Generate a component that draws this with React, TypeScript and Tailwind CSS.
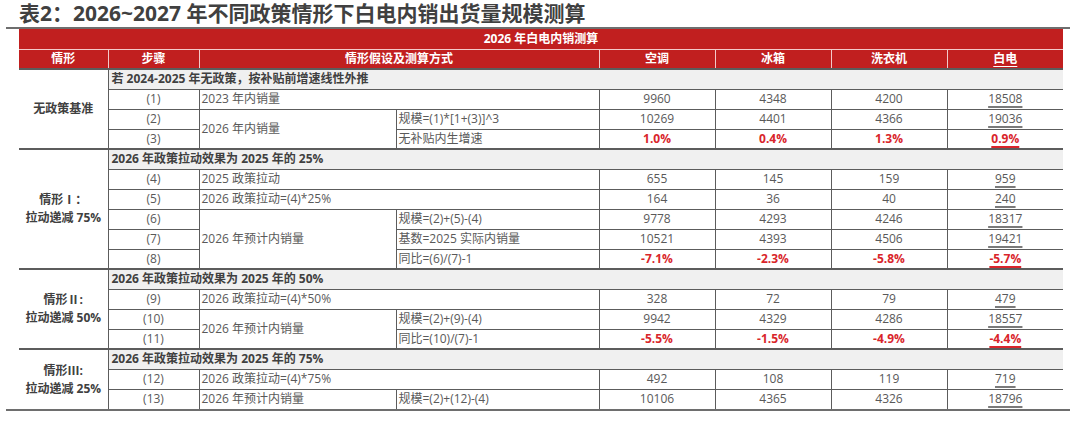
import React from "react";

const FONT = { fontFamily: '"Open Sans", "Noto Sans CJK SC", sans-serif' };

type Val = string;

const B = "border-[#5c5c5c]";

function ValCells({ vals, red, last }: { vals: Val[]; red?: boolean; last?: boolean }) {
  const base = `border-l ${B} ${last ? "" : "border-b"} text-center`;
  const tc = red ? "text-[#d9252b] font-bold" : "text-[#595959]";
  return (
    <>
      {vals.slice(0, 3).map((v, i) => (
        <td key={i} className={`${base} ${tc}`}>{v}</td>
      ))}
      <td className={`${base} ${tc}`}>
        <span
          className={`underline decoration-2 underline-offset-[3px] ${red ? "decoration-[#d9252b]" : "decoration-[#7a7a7a]"}`}
        >
          {vals[3]}
        </span>
      </td>
    </>
  );
}

function StepCell({ s, last }: { s: string; last?: boolean }) {
  return <td className={`${last ? "" : "border-b"} ${B} text-center text-[#595959]`}>{s}</td>;
}

function TextCell({
  t,
  colSpan,
  rowSpan,
  last,
}: {
  t: string;
  colSpan?: number;
  rowSpan?: number;
  last?: boolean;
}) {
  return (
    <td
      colSpan={colSpan}
      rowSpan={rowSpan}
      className={`border-l ${last ? "" : "border-b"} ${B} pl-[2px] text-left text-[#595959]`}
    >
      {t}
    </td>
  );
}

function SectionHead({ label, text, rowSpan }: { label: React.ReactNode; text: string; rowSpan: number }) {
  return (
    <tr className="h-[20px]">
      <td
        rowSpan={rowSpan}
        className={`border-t-2 border-r ${B} text-center font-bold text-[#404040] leading-[18px]`}
      >
        {label}
      </td>
      <td colSpan={7} className={`border-t-2 border-b ${B} bg-[#f0f0f0] pl-[3px] font-bold text-[#404040]`}>
        {text}
      </td>
    </tr>
  );
}

export default function App() {
  return (
    <div className="w-[1080px] h-[423px] bg-white overflow-hidden" style={FONT}>
      <div className="h-[27px] pl-[19px] text-[21px] leading-[27px] font-bold text-[#404040] whitespace-nowrap">
        表2：2026~2027 年不同政策情形下白电内销出货量规模测算
      </div>
      <div className="ml-[6px] w-[1064px] border-t-2 border-b-2 border-[#6e6e6e]">
        <table className="ml-[13px] w-[1044px] table-fixed text-[12px]">
          <colgroup>
            <col className="w-[89px]" />
            <col className="w-[91px]" />
            <col className="w-[197px]" />
            <col className="w-[203px]" />
            <col className="w-[116px]" />
            <col className="w-[116px]" />
            <col className="w-[116px]" />
            <col className="w-[116px]" />
          </colgroup>
          <thead>
            <tr className="h-[20px] bg-[#c11f1f] text-white font-bold">
              <td colSpan={8} className="text-center border-b border-[#f3c9c9]">
                2026 年白电内销测算
              </td>
            </tr>
            <tr className="h-[20px] bg-[#c11f1f] text-white font-bold">
              <td className="text-center border-b-2 border-b-[#5c5c5c]">情形</td>
              <td className="text-center border-l border-l-[#f3c9c9] border-b-2 border-b-[#5c5c5c]">步骤</td>
              <td colSpan={2} className="text-center border-l border-l-[#f3c9c9] border-b-2 border-b-[#5c5c5c]">
                情形假设及测算方式
              </td>
              <td className="text-center border-l border-l-[#f3c9c9] border-b-2 border-b-[#5c5c5c]">空调</td>
              <td className="text-center border-l border-l-[#f3c9c9] border-b-2 border-b-[#5c5c5c]">冰箱</td>
              <td className="text-center border-l border-l-[#f3c9c9] border-b-2 border-b-[#5c5c5c]">洗衣机</td>
              <td className="text-center border-l border-l-[#f3c9c9] border-b-2 border-b-[#5c5c5c]">
                <span className="underline decoration-1 underline-offset-[3px]">白电</span>
              </td>
            </tr>
          </thead>
          <tbody>
            <SectionHead rowSpan={4} label="无政策基准" text="若 2024-2025 年无政策，按补贴前增速线性外推" />
            <tr className="h-[20px]">
              <StepCell s="(1)" />
              <TextCell t="2023 年内销量" colSpan={2} />
              <ValCells vals={["9960", "4348", "4200", "18508"]} />
            </tr>
            <tr className="h-[20px]">
              <StepCell s="(2)" />
              <TextCell t="2026 年内销量" rowSpan={2} />
              <TextCell t="规模=(1)*[1+(3)]^3" />
              <ValCells vals={["10269", "4401", "4366", "19036"]} />
            </tr>
            <tr className="h-[20px]">
              <StepCell s="(3)" />
              <TextCell t="无补贴内生增速" />
              <ValCells red vals={["1.0%", "0.4%", "1.3%", "0.9%"]} />
            </tr>

            <SectionHead
              rowSpan={6}
              label={
                <>
                  情形Ⅰ：
                  <br />
                  拉动递减 75%
                </>
              }
              text="2026 年政策拉动效果为 2025 年的 25%"
            />
            <tr className="h-[20px]">
              <StepCell s="(4)" />
              <TextCell t="2025 政策拉动" colSpan={2} />
              <ValCells vals={["655", "145", "159", "959"]} />
            </tr>
            <tr className="h-[20px]">
              <StepCell s="(5)" />
              <TextCell t="2026 政策拉动=(4)*25%" colSpan={2} />
              <ValCells vals={["164", "36", "40", "240"]} />
            </tr>
            <tr className="h-[20px]">
              <StepCell s="(6)" />
              <TextCell t="2026 年预计内销量" rowSpan={3} />
              <TextCell t="规模=(2)+(5)-(4)" />
              <ValCells vals={["9778", "4293", "4246", "18317"]} />
            </tr>
            <tr className="h-[20px]">
              <StepCell s="(7)" />
              <TextCell t="基数=2025 实际内销量" />
              <ValCells vals={["10521", "4393", "4506", "19421"]} />
            </tr>
            <tr className="h-[20px]">
              <StepCell s="(8)" />
              <TextCell t="同比=(6)/(7)-1" />
              <ValCells red vals={["-7.1%", "-2.3%", "-5.8%", "-5.7%"]} />
            </tr>

            <SectionHead
              rowSpan={4}
              label={
                <>
                  情形Ⅱ:
                  <br />
                  拉动递减 50%
                </>
              }
              text="2026 年政策拉动效果为 2025 年的 50%"
            />
            <tr className="h-[20px]">
              <StepCell s="(9)" />
              <TextCell t="2026 政策拉动=(4)*50%" colSpan={2} />
              <ValCells vals={["328", "72", "79", "479"]} />
            </tr>
            <tr className="h-[20px]">
              <StepCell s="(10)" />
              <TextCell t="2026 年预计内销量" rowSpan={2} />
              <TextCell t="规模=(2)+(9)-(4)" />
              <ValCells vals={["9942", "4329", "4286", "18557"]} />
            </tr>
            <tr className="h-[20px]">
              <StepCell s="(11)" />
              <TextCell t="同比=(10)/(7)-1" />
              <ValCells red vals={["-5.5%", "-1.5%", "-4.9%", "-4.4%"]} />
            </tr>

            <SectionHead
              rowSpan={3}
              label={
                <>
                  情形Ⅲ:
                  <br />
                  拉动递减 25%
                </>
              }
              text="2026 年政策拉动效果为 2025 年的 75%"
            />
            <tr className="h-[20px]">
              <StepCell s="(12)" />
              <TextCell t="2026 政策拉动=(4)*75%" colSpan={2} />
              <ValCells vals={["492", "108", "119", "719"]} />
            </tr>
            <tr className="h-[20px]">
              <StepCell s="(13)" last />
              <TextCell t="2026 年预计内销量" last />
              <TextCell t="规模=(2)+(12)-(4)" last />
              <ValCells last vals={["10106", "4365", "4326", "18796"]} />
            </tr>
          </tbody>
        </table>
      </div>
    </div>
  );
}
